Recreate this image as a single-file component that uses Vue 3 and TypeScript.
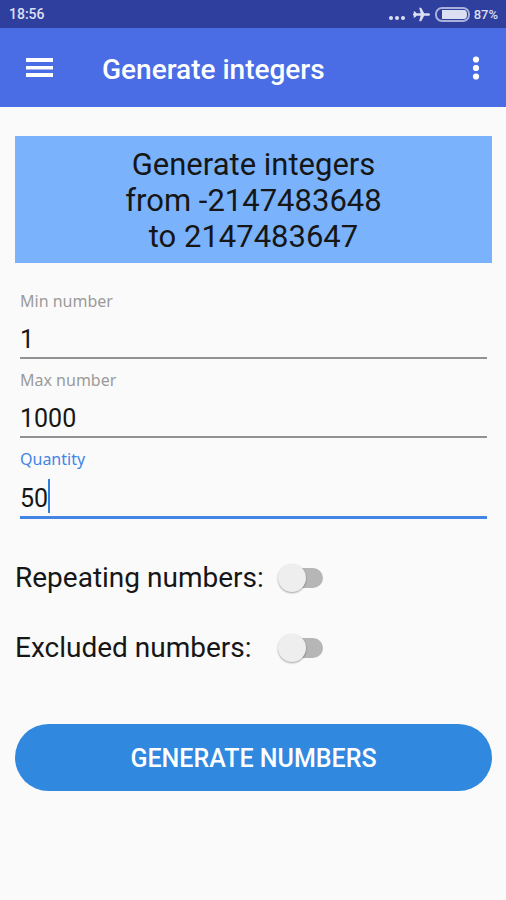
<script setup lang="ts">
import { reactive, ref } from 'vue'

interface Field {
  id: string
  label: string
  value: string
}

interface Option {
  id: string
  label: string
  checked: boolean
}

const fields = reactive<Field[]>([
  { id: 'min', label: 'Min number', value: '1' },
  { id: 'max', label: 'Max number', value: '1000' },
  { id: 'quantity', label: 'Quantity', value: '50' },
])

const options = reactive<Option[]>([
  { id: 'repeating', label: 'Repeating numbers:', checked: false },
  { id: 'excluded', label: 'Excluded numbers:', checked: false },
])

const activeField = ref('quantity')
</script>

<template>
  <div class="screen">
    <div class="status-bar">
      <span>18:56</span>
      <div class="status-icons">
        <svg class="dots" width="16" height="6" viewBox="0 0 16 6" aria-hidden="true">
          <circle cx="2" cy="3" r="2" />
          <circle cx="8" cy="3" r="2" />
          <circle cx="14" cy="3" r="2" />
        </svg>
        <svg class="plane" width="17" height="15" viewBox="0 0 17 15" aria-hidden="true">
          <path d="M17 7.5C17 6.7 16.2 6.2 15.3 6.2H11.2L8.2 .8H6.2L7.6 6.2H3.6L2 4.4H.4L1.1 6.4H0V8.6H1.1L.4 10.6H2L3.6 8.8H7.6L6.2 14.2H8.2L11.2 8.8H15.3C16.2 8.8 17 8.3 17 7.5Z" />
        </svg>
        <svg class="battery" width="35" height="15" viewBox="0 0 35 15" aria-hidden="true">
          <rect class="battery-case" x="1" y="1" width="33" height="13" rx="6" />
          <path d="M7 3H29.5Q32 3.5 32 7.5T29.5 12H7Z" />
        </svg>
        <span>87%</span>
      </div>
    </div>

    <header class="app-bar">
      <button class="icon-button" type="button" aria-label="Menu">
        <svg width="28" height="20" viewBox="0 0 28 20" aria-hidden="true">
          <path d="M0 0H27V4H0ZM0 8H27V11.5H0ZM0 15H27V19H0Z" />
        </svg>
      </button>
      <h1>Generate integers</h1>
      <button class="icon-button more" type="button" aria-label="More options">
        <svg width="8" height="24" viewBox="0 0 8 24" aria-hidden="true">
          <circle cx="4" cy="3.5" r="3.1" />
          <circle cx="4" cy="12" r="3.1" />
          <circle cx="4" cy="20.5" r="3.1" />
        </svg>
      </button>
    </header>

    <main>
      <p class="range">
        Generate integers<br />
        from -2147483648<br />
        to 2147483647
      </p>

      <form @submit.prevent>
        <div
          v-for="field in fields"
          :key="field.id"
          class="field"
          :class="{ active: field.id === activeField }"
        >
          <label :for="field.id">{{ field.label }}</label>
          <div class="entry">
            <input
              :id="field.id"
              v-model="field.value"
              type="text"
              inputmode="numeric"
              @focus="activeField = field.id"
            />
            <span
              v-if="field.id === activeField"
              class="caret"
              :style="{ left: `${field.value.length}ch` }"
            ></span>
          </div>
        </div>

        <div class="options">
          <div v-for="option in options" :key="option.id" class="option">
            <label :for="option.id">{{ option.label }}</label>
            <input :id="option.id" v-model="option.checked" class="switch" type="checkbox" role="switch" />
          </div>
        </div>

        <button class="generate" type="submit">GENERATE NUMBERS</button>
      </form>
    </main>
  </div>
</template>

<style>
body {
  margin: 0;
  background: #fafafa;
}
</style>

<style scoped>
.screen {
  min-height: 100vh;
  background: #fafafa;
  color: #161616;
  font-family: Roboto, "Liberation Sans", sans-serif;
}

.status-bar {
  display: flex;
  align-items: center;
  justify-content: space-between;
  height: 28px;
  padding: 0 8px 0 9px;
  background: #2f3f9e;
  color: #dcdff2;
  font-size: 14px;
  font-weight: 500;
}

.status-icons {
  display: flex;
  align-items: center;
  gap: 4px;
  font-size: 13px;
}

.status-icons svg {
  fill: #dcdff2;
}

.status-icons .dots {
  margin-top: 8px;
  margin-right: 4px;
}

.status-icons .plane {
  margin-right: 1px;
}

.status-icons .battery-case {
  fill: none;
  stroke: #aab1dc;
  stroke-width: 2;
}

.app-bar {
  display: flex;
  align-items: center;
  height: 79px;
  padding: 0 16px;
  background: #4a6de5;
  color: #fff;
}

.app-bar h1 {
  flex: 1;
  margin: 0 0 0 38px;
  padding-top: 4px;
  font-size: 28px;
  font-weight: 500;
  line-height: 36px;
}

.icon-button {
  display: flex;
  align-items: center;
  justify-content: center;
  width: 48px;
  height: 48px;
  padding: 0;
  border: 0;
  background: none;
}

.icon-button svg {
  fill: #fff;
}

.icon-button.more {
  width: 28px;
}

main {
  padding: 29px 14px 29px 15px;
}

.range {
  margin: 0 0 17px;
  padding: 11px 0 8px;
  background: #7ab3fc;
  font-size: 31px;
  line-height: 36px;
  text-align: center;
}

.field {
  margin: 0 5px;
  padding-top: 11px;
}

.field label {
  display: block;
  color: #9a9a9a;
  font-family: "Noto Sans", sans-serif;
  font-size: 16px;
  line-height: 20px;
}

.entry {
  position: relative;
  font-size: 25px;
}

.field input {
  box-sizing: border-box;
  display: block;
  width: 100%;
  height: 48px;
  padding: 11px 0 0;
  border: 0;
  border-bottom: 2px solid #929292;
  border-radius: 0;
  outline: 0;
  background: none;
  caret-color: transparent;
  color: #161616;
  font: inherit;
}

.field.active label {
  color: #4385e4;
}

.field.active input {
  height: 50px;
  border-bottom: 3px solid #4385e4;
}

.caret {
  position: absolute;
  bottom: 6px;
  width: 2px;
  height: 34px;
  background: #2f7fe0;
}

.options {
  padding-top: 23px;
}

.option {
  display: grid;
  grid-template-columns: 262px auto;
  align-items: center;
  justify-content: start;
  height: 70px;
  font-size: 28px;
}

.switch {
  position: relative;
  appearance: none;
  width: 46px;
  height: 28px;
  margin: 2px 0 0;
}

.switch::before {
  content: "";
  position: absolute;
  inset: 4px 0 4px 8px;
  border-radius: 10px;
  background: #b6b6b6;
}

.switch::after {
  content: "";
  position: absolute;
  top: 0;
  left: 1px;
  width: 28px;
  height: 28px;
  border-radius: 50%;
  background: #eee;
  box-shadow: 0 1px 2px rgba(0, 0, 0, 0.35);
}

.switch:checked::after {
  right: 0;
  left: auto;
  background: #3088df;
}

.generate {
  display: block;
  width: 100%;
  height: 67px;
  margin-top: 42px;
  padding: 2px 0 0;
  border: 0;
  border-radius: 34px;
  background: #3088df;
  color: #fff;
  font-family: inherit;
  font-size: 25px;
  font-weight: 500;
}
</style>
